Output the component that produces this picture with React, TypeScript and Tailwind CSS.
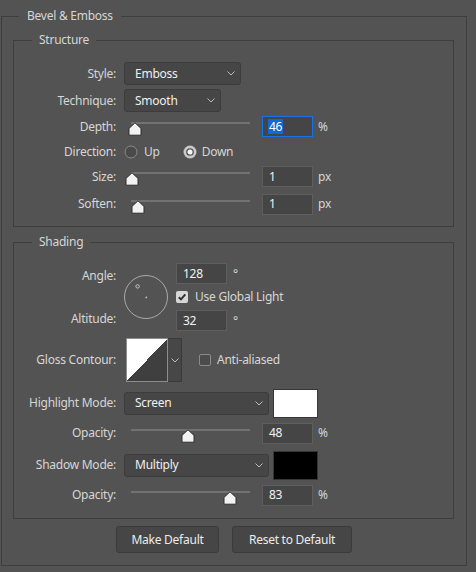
import type { ReactNode } from "react";

function Chevron() {
  return (
    <svg width="8" height="5" viewBox="0 0 8 5" fill="none" className="shrink-0">
      <path d="M0.5 0.5L4 4L7.5 0.5" stroke="#bdbdbd" strokeWidth="1" />
    </svg>
  );
}

function Select({ value, w }: { value: string; w: string }) {
  return (
    <div
      className={`ml-[8px] flex h-[23px] items-center justify-between rounded-[3px] border border-[#3c3c3c] bg-[#464646] pl-[10px] pr-[5px] text-[#efefef] ${w}`}
    >
      <span>{value}</span>
      <Chevron />
    </div>
  );
}

function Field({ value, focused, w = "w-[51px]" }: { value: string; focused?: boolean; w?: string }) {
  return (
    <div
      className={`flex h-[21px] items-center border pl-[5px] text-[#f2f2f2] ${w} ${
        focused ? "border-[#1473e6] bg-[#454545]" : "border-[#5e5e5e] bg-[#454545]"
      }`}
    >
      {focused ? (
        <span className="bg-[#1567d3] px-[1px] leading-[15px] text-white">{value}</span>
      ) : (
        <span className="pl-[1px]">{value}</span>
      )}
    </div>
  );
}

function Thumb() {
  return (
    <svg width="14" height="14" viewBox="0 0 14 14">
      <path
        d="M7 0.8L13 6.4V13.2H1V6.4Z"
        fill="#f2f2f2"
        stroke="#2e2e2e"
        strokeWidth="1"
        strokeLinejoin="round"
      />
    </svg>
  );
}

// pct is where the thumb's centre sits along the 119px track
function Slider({ pct }: { pct: number }) {
  return (
    <div className="relative ml-[15px] h-[21px] w-[119px]">
      <div className="absolute left-0 right-0 top-[6px] h-[2px] bg-[#727272]" />
      <div className="absolute top-[6px] -translate-x-1/2" style={{ left: `${(pct / 100) * 119}px` }}>
        <Thumb />
      </div>
    </div>
  );
}

function Row({ label, h, children }: { label: string; h: string; children: ReactNode }) {
  return (
    <div className={`flex items-center ${h}`}>
      <div className="w-[102px] shrink-0 text-right">{label}</div>
      {children}
    </div>
  );
}

function SliderRow({ label, h, pct, value, unit, focused }: {
  label: string;
  h: string;
  pct: number;
  value: string;
  unit: string;
  focused?: boolean;
}) {
  return (
    <Row label={label} h={h}>
      <Slider pct={pct} />
      <div className="ml-[12px]">
        <Field value={value} focused={focused} />
      </div>
      <span className="ml-[5px]">{unit}</span>
    </Row>
  );
}

function Radio({ checked }: { checked?: boolean }) {
  return (
    <svg width="14" height="14" viewBox="0 0 14 14" className="shrink-0">
      {checked ? (
        <>
          <circle cx="7" cy="7" r="6.5" fill="#c9c9c9" />
          <circle cx="7" cy="7" r="3.2" fill="#f6f6f6" stroke="#575757" strokeWidth="1.3" />
        </>
      ) : (
        <circle cx="7" cy="7" r="6" fill="#4a4a4a" stroke="#8a8a8a" strokeWidth="1" />
      )}
    </svg>
  );
}

function Checkbox({ checked }: { checked?: boolean }) {
  return checked ? (
    <div className="flex h-[12px] w-[12px] shrink-0 items-center justify-center rounded-[2px] bg-[#d6d6d6]">
      <svg width="10" height="10" viewBox="0 0 10 10" fill="none">
        <path d="M1.8 5.2L4 7.4L8.3 2.4" stroke="#2f2f2f" strokeWidth="2" />
      </svg>
    </div>
  ) : (
    <div className="h-[12px] w-[12px] shrink-0 rounded-[2px] border border-[#8a8a8a] bg-[#4c4c4c]" />
  );
}

function AngleDial() {
  return (
    <svg width="44" height="44" viewBox="0 0 44 44" className="ml-[8px] mt-[13px] shrink-0">
      <circle cx="22" cy="22" r="21.5" fill="none" stroke="#a9a9a9" strokeWidth="1" />
      <circle cx="13.6" cy="11.4" r="1.7" fill="none" stroke="#c4c4c4" strokeWidth="1" />
      <circle cx="22.3" cy="22.4" r="0.9" fill="#c4c4c4" />
    </svg>
  );
}

function Contour() {
  return (
    <div className="ml-[10px] flex h-[44px]">
      <div className="h-[44px] w-[42px] border border-[#8c8c8c] bg-[#3f3f3f]">
        <svg width="40" height="42" viewBox="0 0 40 42" shapeRendering="crispEdges">
          <polygon points="0,0 40,0 0,42" fill="#ffffff" />
        </svg>
      </div>
      <div className="flex h-[44px] w-[14px] items-center justify-center border border-l-0 border-[#3a3a3a] bg-[#474747]">
        <Chevron />
      </div>
    </div>
  );
}

function Swatch({ color }: { color: string }) {
  return <div className={`ml-[4px] h-[29px] w-[45px] border border-[#363636] ${color}`} />;
}

export default function App() {
  return (
    <div className="min-h-screen w-[476px] bg-[#535353] pl-[1px] pt-[7px] font-['Noto_Sans','DejaVu_Sans',sans-serif] text-[12px] tracking-[-0.25px] text-[#d6d6d6]">
      <fieldset className="w-[466px] border border-[#3e3e3e] pb-[12px]">
        <legend className="ml-[17px] px-[8px] leading-[18px]">Bevel &amp; Emboss</legend>

        <fieldset className="ml-[11px] mt-[6px] w-[441px] border border-[#3e3e3e] pb-[7px] pt-[11px]">
          <legend className="ml-[18px] px-[7px] leading-[18px]">Structure</legend>
          <Row label="Style:" h="h-[27px]">
            <Select value="Emboss" w="w-[117px]" />
          </Row>
          <Row label="Technique:" h="h-[27px]">
            <Select value="Smooth" w="w-[97px]" />
          </Row>
          <SliderRow label="Depth:" h="h-[25px]" pct={3.4} value="46" unit="%" focused />
          <Row label="Direction:" h="h-[25px]">
            <div className="ml-[8px] flex items-center">
              <Radio />
              <span className="ml-[6px]">Up</span>
              <div className="ml-[23px]">
                <Radio checked />
              </div>
              <span className="ml-[5px]">Down</span>
            </div>
          </Row>
          <SliderRow label="Size:" h="h-[25px]" pct={0.8} value="1" unit="px" />
          <SliderRow label="Soften:" h="h-[30px]" pct={6.2} value="1" unit="px" />
        </fieldset>

        <fieldset className="ml-[11px] mt-[6px] w-[441px] border border-[#3e3e3e] pb-[8px] pt-[11px]">
          <legend className="ml-[18px] px-[7px] leading-[18px]">Shading</legend>

          <div className="flex">
            <div className="flex w-[102px] shrink-0 flex-col items-end gap-[25px] pt-[5px] leading-[18px]">
              <span>Angle:</span>
              <span>Altitude:</span>
            </div>
            <AngleDial />
            <div className="ml-[8px] flex flex-col pt-[1px]">
              <div className="flex h-[21px] items-center">
                <Field value="128" />
                <span className="ml-[6px]">°</span>
              </div>
              <div className="flex h-[26px] items-center">
                <Checkbox checked />
                <span className="ml-[7px]">Use Global Light</span>
              </div>
              <div className="flex h-[21px] items-center">
                <Field value="32" />
                <span className="ml-[6px]">°</span>
              </div>
            </div>
          </div>

          <div className="mt-[7px]">
            <Row label="Gloss Contour:" h="h-[44px]">
              <Contour />
              <div className="ml-[17px]">
                <Checkbox />
              </div>
              <span className="ml-[6px]">Anti-aliased</span>
            </Row>
          </div>

          <div className="mt-[6px]">
            <Row label="Highlight Mode:" h="h-[30px]">
              <Select value="Screen" w="w-[145px]" />
              <Swatch color="bg-white" />
            </Row>
          </div>
          <SliderRow label="Opacity:" h="h-[30px]" pct={48} value="48" unit="%" />
          <div className="mt-[2px]">
            <Row label="Shadow Mode:" h="h-[30px]">
              <Select value="Multiply" w="w-[145px]" />
              <Swatch color="bg-black" />
            </Row>
          </div>
          <SliderRow label="Opacity:" h="h-[30px]" pct={83} value="83" unit="%" />
        </fieldset>

        <div className="mt-[7px] flex justify-center gap-[13px] text-[#ececec]">
          <button className="h-[27px] w-[103px] rounded-[3px] border border-[#3b3b3b] bg-[#464646]">
            Make Default
          </button>
          <button className="h-[27px] w-[120px] rounded-[3px] border border-[#3b3b3b] bg-[#464646]">
            Reset to Default
          </button>
        </div>
      </fieldset>
    </div>
  );
}
